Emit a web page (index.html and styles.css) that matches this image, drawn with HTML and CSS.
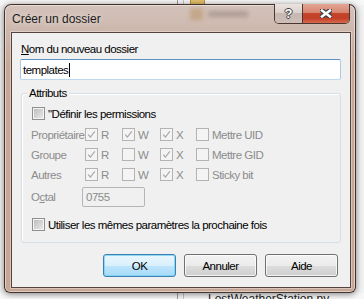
FILE: index.html
```html
<!DOCTYPE html>
<html lang="fr">
<head>
    <meta charset="UTF-8">
    <meta name="viewport" content="width=device-width, initial-scale=1.0">
    <title>Créer un dossier</title>
    <link rel="stylesheet" href="styles.css">
</head>
<body>
    <div class="explorer-top">
        <span class="col-line"></span>
        <span class="folder-icon"></span>
    </div>
    <div class="explorer-bottom">
        <span class="col-line"></span>
        <span class="file-name">LostWeatherStation.py</span>
    </div>

    <div class="window">
        <div class="titlebar">
            <span class="glass-folder"></span>
            <span class="glass-text"></span>
            <span class="title">Créer un dossier</span>
            <div class="caption-buttons">
                <span class="cap-btn help">?</span>
                <span class="cap-btn close">
                    <svg width="12" height="9" viewBox="0 0 12 9">
                        <path d="M2 1.5 L10 7.5 M10 1.5 L2 7.5" stroke="#3b3b3b" stroke-width="5" stroke-linecap="square"/>
                        <path d="M2 1.5 L10 7.5 M10 1.5 L2 7.5" stroke="#fff" stroke-width="2.6" stroke-linecap="square"/>
                    </svg>
                </span>
            </div>
        </div>

        <div class="client">
            <label class="field-label" for="folderName"><u>N</u>om du nouveau dossier</label>
            <div class="textbox" id="folderName">templates<span class="caret"></span></div>

            <div class="group">
                <span class="legend">Attributs</span>

                <div class="check-row">
                    <span class="cb"></span>
                    <span>"Définir les permissions</span>
                </div>

                <div class="perms">
                    <span class="perm-label">Propriétaire</span>
                    <span class="perm"><span class="cb disabled checked"><svg width="11" height="11" viewBox="0 0 11 11"><path d="M2.2 5.6 L4.4 8 L8.8 2.4" fill="none" stroke="#a9a9a9" stroke-width="1.2"/></svg></span>R</span>
                    <span class="perm"><span class="cb disabled checked"><svg width="11" height="11" viewBox="0 0 11 11"><path d="M2.2 5.6 L4.4 8 L8.8 2.4" fill="none" stroke="#a9a9a9" stroke-width="1.2"/></svg></span>W</span>
                    <span class="perm"><span class="cb disabled checked"><svg width="11" height="11" viewBox="0 0 11 11"><path d="M2.2 5.6 L4.4 8 L8.8 2.4" fill="none" stroke="#a9a9a9" stroke-width="1.2"/></svg></span>X</span>
                    <span class="perm"><span class="cb disabled"></span>Mettre UID</span>

                    <span class="perm-label">Groupe</span>
                    <span class="perm"><span class="cb disabled checked"><svg width="11" height="11" viewBox="0 0 11 11"><path d="M2.2 5.6 L4.4 8 L8.8 2.4" fill="none" stroke="#a9a9a9" stroke-width="1.2"/></svg></span>R</span>
                    <span class="perm"><span class="cb disabled"></span>W</span>
                    <span class="perm"><span class="cb disabled checked"><svg width="11" height="11" viewBox="0 0 11 11"><path d="M2.2 5.6 L4.4 8 L8.8 2.4" fill="none" stroke="#a9a9a9" stroke-width="1.2"/></svg></span>X</span>
                    <span class="perm"><span class="cb disabled"></span>Mettre GID</span>

                    <span class="perm-label">Autres</span>
                    <span class="perm"><span class="cb disabled checked"><svg width="11" height="11" viewBox="0 0 11 11"><path d="M2.2 5.6 L4.4 8 L8.8 2.4" fill="none" stroke="#a9a9a9" stroke-width="1.2"/></svg></span>R</span>
                    <span class="perm"><span class="cb disabled"></span>W</span>
                    <span class="perm"><span class="cb disabled checked"><svg width="11" height="11" viewBox="0 0 11 11"><path d="M2.2 5.6 L4.4 8 L8.8 2.4" fill="none" stroke="#a9a9a9" stroke-width="1.2"/></svg></span>X</span>
                    <span class="perm"><span class="cb disabled"></span>Sticky bit</span>
                </div>

                <div class="octal-row">
                    <span class="perm-label octal-label">O<u>c</u>tal</span>
                    <span class="octal-box">0755</span>
                </div>

                <div class="check-row remember">
                    <span class="cb"></span>
                    <span>Utiliser les mêmes paramètres la prochaine fois</span>
                </div>
            </div>

            <div class="buttons">
                <span class="btn default">OK</span>
                <span class="btn">Annuler</span>
                <span class="btn">Aide</span>
            </div>
        </div>
    </div>
</body>
</html>
```

FILE: styles.css
```css
body {
    margin: 0;
    width: 364px;
    height: 299px;
    overflow: hidden;
    position: relative;
    background: #f2f2f2;
    font-family: "Liberation Sans", Arial, sans-serif;
    font-size: 11.5px;
    letter-spacing: -0.5px;
    color: #000;
}

/* explorer window behind the dialog */
.explorer-top {
    position: absolute;
    top: 0;
    left: 0;
    right: 0;
    height: 5px;
    background: #f7f7f7;
}
.explorer-bottom {
    position: absolute;
    top: 293px;
    left: 0;
    right: 0;
    height: 6px;
    overflow: hidden;
    background: #f7f7f7;
}
.col-line {
    position: absolute;
    left: 177px;
    top: 0;
    width: 5px;
    height: 100%;
    border-left: 1px solid #9c9c9c;
    border-right: 1px solid #c4c4c4;
}
.folder-icon {
    position: absolute;
    left: 190px;
    top: -8px;
    width: 13px;
    height: 11px;
    background: #e3c06a;
    border: 1px solid #b8923e;
}
.file-name {
    position: absolute;
    left: 208px;
    top: -1px;
    font-size: 12px;
    letter-spacing: 0;
    line-height: 14px;
    color: #1a1a1a;
}

/* dialog frame */
.window {
    position: relative;
    z-index: 1;
    margin: 4px 0 0 4px;
    width: 352px;
    height: 289px;
    box-sizing: border-box;
    padding-bottom: 4px;
    display: flex;
    flex-direction: column;
    border: 1px solid rgba(45, 28, 22, 0.85);
    border-radius: 7px 7px 6px 6px;
    background: linear-gradient(to bottom, #d3c3bb 0, #ccb5aa 30px, #c7a898 60px, #c6a696 100%);
    box-shadow: inset 0 0 0 1px rgba(255, 255, 255, 0.45), 0 1px 6px rgba(0, 0, 0, 0.5);
}
.titlebar {
    position: relative;
    height: 27px;
    display: flex;
    align-items: center;
    padding-left: 7px;
    flex-shrink: 0;
}
.glass-folder {
    position: absolute;
    left: 185px;
    top: 3px;
    width: 13px;
    height: 12px;
    background: #b89462;
    opacity: 0.55;
    filter: blur(2px);
}
.glass-text {
    position: absolute;
    left: 203px;
    top: 6px;
    width: 40px;
    height: 6px;
    background: #85766f;
    opacity: 0.45;
    filter: blur(2px);
}
.title {
    position: relative;
    flex: 1;
    font-size: 12px;
    letter-spacing: 0;
    color: #1b1b1b;
    text-shadow: 0 0 6px rgba(255, 255, 255, 0.8);
}
.caption-buttons {
    position: relative;
    align-self: flex-start;
    margin: -1px 5px 0 0;
    display: flex;
    height: 19px;
    border: 1px solid rgba(50, 32, 26, 0.85);
    border-top: none;
    border-radius: 0 0 5px 5px;
    overflow: hidden;
}
.cap-btn {
    display: flex;
    align-items: center;
    justify-content: center;
}
.help {
    width: 27px;
    border-right: 1px solid rgba(50, 32, 26, 0.85);
    background: linear-gradient(to bottom, #eae3df 0, #ddd2cd 45%, #c7b8b1 50%, #cdbfb8 100%);
    color: #fff;
    font-weight: bold;
    font-size: 13px;
    letter-spacing: 0;
    text-shadow: -1px 0 #3c3c3c, 1px 0 #3c3c3c, 0 -1px #3c3c3c, 0 1px #3c3c3c;
}
.close {
    width: 46px;
    background: linear-gradient(to bottom, #e3a493 0, #d78672 45%, #c5452c 50%, #c13f27 75%, #d9694f 100%);
}

/* client area */
.client {
    flex: 1;
    margin: 0 4px 0 6px;
    box-sizing: border-box;
    padding: 9px 9px 0 8px;
    border: 1px solid #55443d;
    background: #f0f0f0;
    box-shadow: 0 0 0 1px rgba(255, 255, 255, 0.35);
}
.field-label {
    display: block;
    height: 14px;
    line-height: 14px;
    padding-left: 1px;
}
.textbox {
    margin-top: 3px;
    height: 21px;
    box-sizing: border-box;
    display: flex;
    align-items: center;
    padding-left: 2px;
    background: #fff;
    border: 1px solid;
    border-color: #5b93c7 #a9c9e8 #bcd7f0 #a9c9e8;
    border-radius: 2px;
}
.caret {
    display: inline-block;
    width: 1px;
    height: 14px;
    margin-left: 1px;
    background: #000;
}

.group {
    position: relative;
    margin: 13px 0 0 1px;
    height: 150px;
    box-sizing: border-box;
    padding: 13px 0 0 10px;
    border: 1px solid #d5dfe5;
    border-radius: 3px;
    box-shadow: inset 1px 1px 0 #fff;
}
.legend {
    position: absolute;
    top: -8px;
    left: 5px;
    padding: 0 2px;
    line-height: 14px;
    background: #f0f0f0;
}
.check-row {
    display: flex;
    align-items: center;
    gap: 3px;
    height: 13px;
}
.remember {
    margin-top: 11px;
}

.cb {
    display: inline-flex;
    align-items: center;
    justify-content: center;
    width: 13px;
    height: 13px;
    box-sizing: border-box;
    flex-shrink: 0;
    border: 1px solid #8e8f8f;
    background: linear-gradient(135deg, #b9b9b9, #ededed);
    box-shadow: inset 0 0 0 1px #f4f4f4;
}
.cb.disabled {
    border-color: #b3b3b3;
    background: #f4f4f4;
    box-shadow: none;
}

.perms {
    margin-top: 8px;
    display: grid;
    grid-template-columns: 53px 37px 38px 36px auto;
    grid-auto-rows: 13px;
    row-gap: 7px;
    align-items: center;
    color: #8c8c8c;
}
.perm-label {
    margin-left: -1px;
    color: #8c8c8c;
}
.perm {
    display: flex;
    align-items: center;
    gap: 3px;
}

.octal-row {
    margin-top: 6px;
    display: flex;
    align-items: center;
    height: 20px;
}
.octal-label {
    width: 51px;
}
.octal-box {
    width: 63px;
    height: 20px;
    box-sizing: border-box;
    padding-left: 3px;
    line-height: 18px;
    border: 1px solid #b3b6b9;
    border-radius: 2px;
    background: #f0f0f0;
    color: #8c8c8c;
}

.buttons {
    margin-top: 11px;
    padding-right: 3px;
    display: flex;
    justify-content: flex-end;
    gap: 8px;
}
.btn {
    width: 73px;
    height: 23px;
    box-sizing: border-box;
    display: flex;
    align-items: center;
    justify-content: center;
    border: 1px solid #707070;
    border-radius: 3px;
    background: linear-gradient(to bottom, #f2f2f2 0, #ebebeb 50%, #dddddd 51%, #cfcfcf 100%);
    box-shadow: inset 0 0 0 1px rgba(255, 255, 255, 0.75);
}
.btn.default {
    border-color: #3c7fb1;
    background: linear-gradient(to bottom, #eaf6fd 0, #d9f0fc 50%, #bee6fd 51%, #a7d9f5 100%);
    box-shadow: inset 0 0 0 1px rgba(120, 210, 245, 0.8);
}
```
